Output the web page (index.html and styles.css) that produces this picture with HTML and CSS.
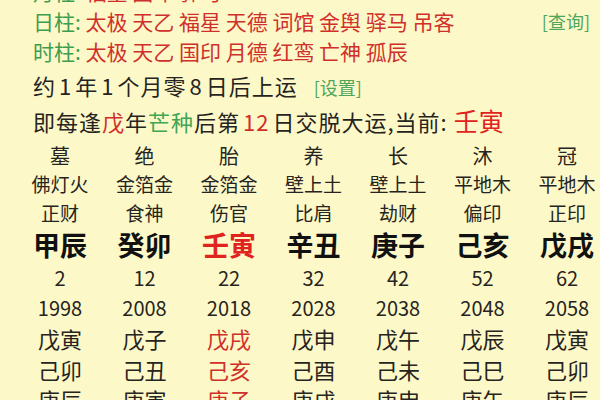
FILE: index.html
```html
<!DOCTYPE html>
<html lang="zh-CN">
<head>
<meta charset="utf-8">
<title>大运</title>
<link rel="stylesheet" href="styles.css">
</head>
<body>
<div class="page">
  <div class="info">
    <div class="ss"><span class="lbl">月柱:</span> <span class="red">福星 国印 驿马</span></div>
    <div class="ss row-link"><span><span class="lbl">日柱:</span> <span class="red">太极 天乙 福星 天德 词馆 金舆 驿马 吊客</span></span><span class="link">[查询]</span></div>
    <div class="ss"><span class="lbl">时柱:</span> <span class="red">太极 天乙 国印 月德 红鸾 亡神 孤辰</span></div>
    <div class="line first">约<span class="d">1</span>年<span class="d">1</span>个月零<span class="d">8</span>日后上运 <span class="link set">[设置]</span></div>
    <div class="line">即每逢<span class="red">戊</span>年<span class="grn">芒种</span>后第<span class="d red">12</span>日交脱大运,当前: <span class="cur">壬寅</span></div>
  </div>
  <div class="grid">
    <div class="c r1">墓</div><div class="c r1">绝</div><div class="c r1">胎</div><div class="c r1">养</div><div class="c r1">长</div><div class="c r1">沐</div><div class="c r1">冠</div>
    <div class="c r2">佛灯火</div><div class="c r2">金箔金</div><div class="c r2">金箔金</div><div class="c r2">壁上土</div><div class="c r2">壁上土</div><div class="c r2">平地木</div><div class="c r2">平地木</div>
    <div class="c r3">正财</div><div class="c r3">食神</div><div class="c r3">伤官</div><div class="c r3">比肩</div><div class="c r3">劫财</div><div class="c r3">偏印</div><div class="c r3">正印</div>
    <div class="c gz">甲辰</div><div class="c gz">癸卯</div><div class="c gz hot">壬寅</div><div class="c gz">辛丑</div><div class="c gz">庚子</div><div class="c gz">己亥</div><div class="c gz">戊戌</div>
    <div class="c num">2</div><div class="c num">12</div><div class="c num">22</div><div class="c num">32</div><div class="c num">42</div><div class="c num">52</div><div class="c num">62</div>
    <div class="c num">1998</div><div class="c num">2008</div><div class="c num">2018</div><div class="c num">2028</div><div class="c num">2038</div><div class="c num">2048</div><div class="c num">2058</div>
    <div class="c yr">戊寅</div><div class="c yr">戊子</div><div class="c yr hot2">戊戌</div><div class="c yr">戊申</div><div class="c yr">戊午</div><div class="c yr">戊辰</div><div class="c yr">戊寅</div>
    <div class="c yr">己卯</div><div class="c yr">己丑</div><div class="c yr hot2">己亥</div><div class="c yr">己酉</div><div class="c yr">己未</div><div class="c yr">己巳</div><div class="c yr">己卯</div>
    <div class="c yr">庚辰</div><div class="c yr">庚寅</div><div class="c yr hot2">庚子</div><div class="c yr">庚戌</div><div class="c yr">庚申</div><div class="c yr">庚午</div><div class="c yr">庚辰</div>
  </div>
</div>
</body>
</html>
```

FILE: styles.css
```css
html, body {
  margin: 0;
  padding: 0;
  background: #fdf8c8;
  overflow: hidden;
}
body {
  width: 600px;
  height: 400px;
  font-family: "Noto Sans CJK SC", "Noto Sans", sans-serif;
  color: #262420;
}
.page {
  width: 600px;
}
.info {
  margin-top: -24px;
  padding-left: 33px;
  padding-right: 10px;
}
.ss {
  font-size: 21px;
  line-height: 30px;
  height: 30px;
  white-space: nowrap;
}
.row-link {
  display: flex;
  justify-content: space-between;
  align-items: center;
}
.lbl {
  color: #3d9d4f;
}
.red {
  color: #d0302b;
}
.grn {
  color: #3fa655;
}
.link {
  color: #4ea65c;
  font-size: 18px;
  letter-spacing: 0;
}
.set {
  margin-left: 10px;
}
.line {
  font-size: 22px;
  letter-spacing: 1px;
  line-height: 35px;
  height: 35px;
  white-space: nowrap;
}
.line.first {
  margin-top: 2px;
}
.d {
  margin: 0 3px;
}
.cur {
  color: #e0231f;
  font-size: 25px;
  letter-spacing: 0;
}
.grid {
  display: grid;
  grid-template-columns: repeat(7, 84.5px);
  grid-template-rows: 28px 27px 30px 34px 33px 28px 31px 31px 30px;
  padding-left: 17.75px;
  margin-top: 4px;
  white-space: nowrap;
}
.c {
  display: flex;
  align-items: center;
  justify-content: center;
  line-height: 1;
}
.r1 {
  font-size: 20px;
}
.r2, .r3 {
  font-size: 19px;
}
.gz {
  font-size: 27px;
  font-weight: bold;
  color: #111;
}
.gz.hot {
  color: #e0231f;
}
.num {
  font-size: 20px;
}
.yr {
  font-size: 22px;
}
.hot2 {
  color: #d0302b;
}
```
